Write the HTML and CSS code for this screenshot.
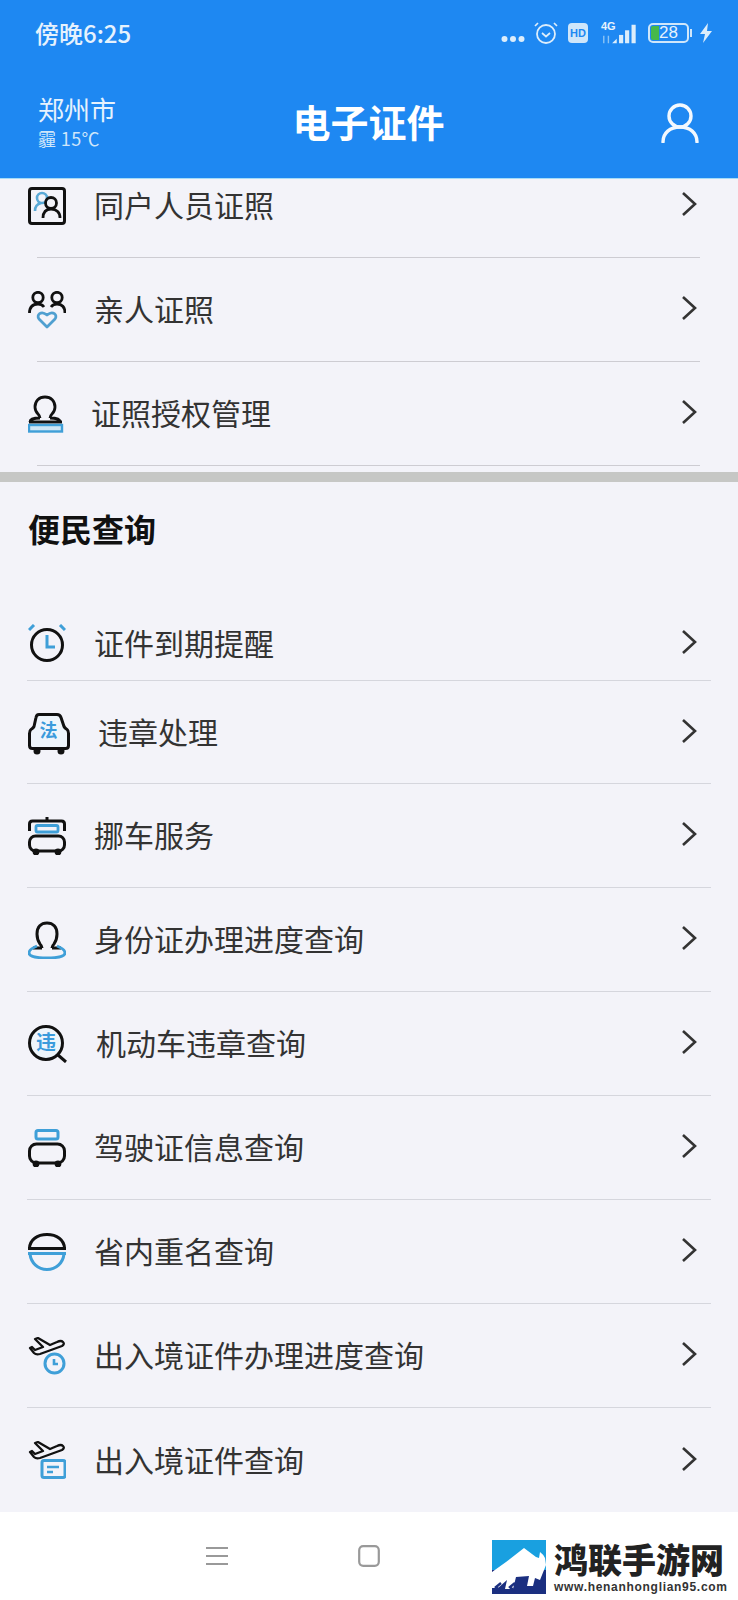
FILE: index.html
```html
<!DOCTYPE html>
<html lang="zh-CN">
<head>
<meta charset="utf-8">
<title>电子证件</title>
<link rel="stylesheet" href="styles.css">
</head>
<body>
<svg class="defs" width="0" height="0" aria-hidden="true">
  <symbol id="chev" viewBox="0 0 16 26"><path d="M2 2l12 11L2 24" fill="none" stroke="#333" stroke-width="2.600"/></symbol>
  <symbol id="plane" viewBox="0 0 38 20"><path d="M2 11l4 5q2 2 6 1l22-8q3-2 1-4t-6 0l-7 3L10 1 7 2l8 8-8 3-3-3z" fill="none" stroke="#111" stroke-width="2.300" stroke-linejoin="round"/></symbol>
</svg>
<div class="page">
  <header class="top">
    <div class="status">
      <span class="status__time">傍晚6:25</span>
      <div class="status__icons">
        <svg class="ic-dots" width="24" height="8" viewBox="0 0 24 8"><g fill="#dcedfb"><circle cx="3.500" cy="4" r="3"/><circle cx="12" cy="4" r="3"/><circle cx="20.500" cy="4" r="3"/></g></svg>
        <svg class="ic-alarm" width="24" height="24" viewBox="0 0 24 24"><g fill="none" stroke="#dcedfb"><circle cx="12" cy="13" r="9" stroke-width="1.800"/><path d="M8 12l4 3.500 4-3.500" stroke-width="1.700"/><path d="M1 5l3-3M23 5l-3-3" stroke-width="1.700"/></g></svg>
        <span class="ic-hd">HD</span>
        <span class="ic-signal">
          <span class="ic-signal__label">4G</span>
          <svg width="40" height="24" viewBox="0 0 40 24"><g fill="#dcedfb"><path d="M12 22l5-5v5z"/><rect x="19.500" y="13" width="4.500" height="9"/><rect x="26" y="8" width="4.500" height="14"/><rect x="33" y="2" width="4.500" height="20"/></g><path d="M3 14v8M8 14v8" stroke="#8cc4f5" stroke-width="1.500"/></svg>
        </span>
        <span class="ic-battery"><span class="ic-battery__level">28</span></span>
        <svg class="ic-bolt" width="14" height="20" viewBox="0 0 14 20"><path d="M9 0L1 11h5l-2 9 9-12H8z" fill="#dcedfb"/></svg>
      </div>
    </div>
    <div class="nav">
      <div class="nav__place">
        <div class="nav__city">郑州市</div>
        <div class="nav__weather">霾 15℃</div>
      </div>
      <h1 class="nav__title">电子证件</h1>
      <svg class="nav__user" width="38" height="40" viewBox="0 0 38 40"><g fill="none" stroke="#f2f8fe" stroke-width="3.400"><circle cx="19" cy="13" r="11"/><path d="M2 39c0-9 7-15 17-15s17 6 17 15" stroke-linecap="round"/></g></svg>
    </div>
  </header>

  <main class="content">
    <section class="list list--inset">
      <a class="row">
        <span class="row__icon"><svg width="38" height="38" viewBox="0 0 38 38"><rect x="1.500" y="1.500" width="35" height="35" rx="2.500" fill="none" stroke="#111" stroke-width="3"/><g fill="none" stroke="#5aa9d6" stroke-width="2.600"><circle cx="14" cy="11" r="5"/><path d="M7 24c0-4 2-7 6-8"/></g><g fill="none" stroke="#111" stroke-width="2.800"><circle cx="23" cy="16" r="5.500"/><path d="M15 31c0-6 3-9 8-9s9 3 9 9"/></g></svg></span>
        <span class="row__label">同户人员证照</span>
        <svg class="row__chev" width="16" height="26"><use href="#chev"/></svg>
      </a>
      <a class="row">
        <span class="row__icon"><svg width="38" height="38" viewBox="0 0 38 38"><g fill="none" stroke="#111" stroke-width="2.800"><circle cx="10" cy="6.500" r="5.200"/><path d="M1.500 22c0-6 3-9 8.500-9 2.500 0 4.500 1 6 3"/><circle cx="29" cy="6.500" r="5.200"/><path d="M37 22c0-6-3-9-8-9-2.500 0-4.500 1-6 3"/></g><path d="M19 36l-8-8c-3-4 2-9 8-4 6-5 11 0 8 4z" fill="none" stroke="#4f9fd0" stroke-width="2.800" stroke-linejoin="round"/></svg></span>
        <span class="row__label">亲人证照</span>
        <svg class="row__chev" width="16" height="26"><use href="#chev"/></svg>
      </a>
      <a class="row">
        <span class="row__icon"><svg width="38" height="38" viewBox="0 0 38 38"><path d="M12 23c0-2-1-3-2-4-2-2-3-4-3-7 0-6 4-10 10-10s10 4 10 10c0 3-1 5-3 7-1 1-2 2-2 4M2 27c0-3 3-4 10-4M32 27c0-3-3-4-10-4M1 27h33" fill="none" stroke="#111" stroke-width="2.800"/><rect x="1" y="30" width="33" height="6.500" fill="#cfe6f6" stroke="#3f9fd8" stroke-width="2.400"/></svg></span>
        <span class="row__label row__label--x92">证照授权管理</span>
        <svg class="row__chev" width="16" height="26"><use href="#chev"/></svg>
      </a>
    </section>
    <div class="band"></div>
    <h2 class="section-title">便民查询</h2>
    <section class="list list--wide">
      <a class="row row--lead">
        <span class="row__icon"><svg width="38" height="38" viewBox="0 0 38 38"><circle cx="19" cy="21" r="15.500" fill="none" stroke="#111" stroke-width="3"/><path d="M19 11v12h8" fill="none" stroke="#3f9fd8" stroke-width="3"/><path d="M1 6l5-5M37 6l-5-5" fill="none" stroke="#3f9fd8" stroke-width="3"/></svg></span>
        <span class="row__label">证件到期提醒</span>
        <svg class="row__chev" width="16" height="26"><use href="#chev"/></svg>
      </a>
      <a class="row row--tight">
        <span class="row__icon"><svg width="42" height="42" viewBox="0 0 42 42"><path d="M11 1.500h18q3 0 4 3l3 9q1 2 3 3 1.500 1 1.500 4v12q0 3-3 3H4.500q-3 0-3-3V20.500q0-3 1.500-4 2-1 3-3l2-9q.5-3 3-3z" fill="#eef5fb" stroke="#111" stroke-width="3" stroke-linejoin="round"/><circle cx="9" cy="38" r="3.500" fill="#111"/><circle cx="33" cy="38" r="3.500" fill="#111"/><text class="icon-glyph" x="20.500" y="24" font-size="18">法</text></svg></span>
        <span class="row__label row__label--x99">违章处理</span>
        <svg class="row__chev" width="16" height="26"><use href="#chev"/></svg>
      </a>
      <a class="row">
        <span class="row__icon"><svg width="38" height="38" viewBox="0 0 38 38"><path d="M1.500 14V7q0-3 3-3h29q3 0 3 3v7M19 0v4" fill="none" stroke="#111" stroke-width="3"/><rect x="8" y="8.500" width="22" height="6.500" rx="1.500" fill="none" stroke="#3f9fd8" stroke-width="2.800"/><rect x="1.500" y="19" width="35" height="15" rx="6" fill="none" stroke="#111" stroke-width="3"/><circle cx="8" cy="35" r="3.400" fill="#111"/><circle cx="30" cy="35" r="3.400" fill="#111"/></svg></span>
        <span class="row__label">挪车服务</span>
        <svg class="row__chev" width="16" height="26"><use href="#chev"/></svg>
      </a>
      <a class="row">
        <span class="row__icon"><svg width="38" height="38" viewBox="0 0 38 38"><path d="M14 27c0-2-1-3-2-4-2-3-3-6-3-10 0-7 4-11 10-11s10 4 10 11c0 4-1 7-3 10-1 1-2 2-2 4M5 27h9M24 27h9" fill="none" stroke="#111" stroke-width="3"/><path d="M9 25c-5 2-8 4-8 7s6 5 18 5 18-2 18-5-3-5-8-7" fill="none" stroke="#3f9fd8" stroke-width="2.800"/></svg></span>
        <span class="row__label">身份证办理进度查询</span>
        <svg class="row__chev" width="16" height="26"><use href="#chev"/></svg>
      </a>
      <a class="row">
        <span class="row__icon"><svg width="40" height="38" viewBox="0 0 40 38"><circle cx="18" cy="18" r="16.500" fill="#eef5fb" stroke="#111" stroke-width="3"/><path d="M30 30l8 7" stroke="#111" stroke-width="3"/><text class="icon-glyph" x="18" y="25" font-size="20">违</text></svg></span>
        <span class="row__label row__label--x97">机动车违章查询</span>
        <svg class="row__chev" width="16" height="26"><use href="#chev"/></svg>
      </a>
      <a class="row">
        <span class="row__icon"><svg width="38" height="38" viewBox="0 0 38 38"><rect x="8" y="1.500" width="22" height="8.500" rx="2" fill="none" stroke="#3f9fd8" stroke-width="3"/><rect x="1.500" y="15" width="35" height="19" rx="7" fill="none" stroke="#111" stroke-width="3"/><circle cx="8" cy="35" r="3.400" fill="#111"/><circle cx="30" cy="35" r="3.400" fill="#111"/></svg></span>
        <span class="row__label">驾驶证信息查询</span>
        <svg class="row__chev" width="16" height="26"><use href="#chev"/></svg>
      </a>
      <a class="row">
        <span class="row__icon"><svg width="38" height="38" viewBox="0 0 38 38"><path d="M1.500 15C2 7 9 1.500 19 1.500S36 7 36.500 15" fill="none" stroke="#111" stroke-width="3"/><path d="M0 15.500h38" stroke="#111" stroke-width="3"/><path d="M0 20.500h38" stroke="#3f9fd8" stroke-width="3"/><path d="M2 21c1 9 8 15.500 17 15.500S35 30 36 21" fill="none" stroke="#3f9fd8" stroke-width="3"/></svg></span>
        <span class="row__label">省内重名查询</span>
        <svg class="row__chev" width="16" height="26"><use href="#chev"/></svg>
      </a>
      <a class="row">
        <span class="row__icon"><svg width="38" height="38" viewBox="0 0 38 38"><use href="#plane" width="38" height="20"/><circle cx="26.500" cy="26.500" r="9.500" fill="none" stroke="#3f9fd8" stroke-width="3"/><path d="M26 22v5h4" fill="none" stroke="#3f9fd8" stroke-width="2.600"/></svg></span>
        <span class="row__label">出入境证件办理进度查询</span>
        <svg class="row__chev" width="16" height="26"><use href="#chev"/></svg>
      </a>
      <a class="row row--last">
        <span class="row__icon"><svg width="38" height="38" viewBox="0 0 38 38"><use href="#plane" width="38" height="20"/><rect x="14" y="19.500" width="23" height="17" rx="2" fill="none" stroke="#3f9fd8" stroke-width="3"/><path d="M19 26h12M19 31h6" fill="none" stroke="#3f9fd8" stroke-width="2.600"/></svg></span>
        <span class="row__label">出入境证件查询</span>
        <svg class="row__chev" width="16" height="26"><use href="#chev"/></svg>
      </a>
    </section>
  </main>

  <footer class="bar">
    <svg class="bar__menu" width="22" height="20" viewBox="0 0 22 20"><path d="M0 2h22M0 10h22M0 18h22" stroke="#999" stroke-width="2"/></svg>
    <svg class="bar__home" width="22" height="22" viewBox="0 0 22 22"><rect x="1.200" y="1.200" width="19.600" height="19.600" rx="4" fill="none" stroke="#999" stroke-width="2.200"/></svg>
    <div class="mark">
      <svg class="mark__logo" width="54" height="54" viewBox="0 0 54 54"><rect width="54" height="54" fill="#19a0e0"/><rect y="30" width="54" height="24" fill="#1b2f80"/><path d="M0 32l14-10L32 8l12 9 3 1 1-6q4 3 5 6l1 7-6 15-5-2-2 8h-6l2-10-13 1-3 12h-8l2-9-9 8H0z" fill="#fff"/><path d="M9 43l-5 4 5 5M23 43l-5 4 5 5" fill="none" stroke="#1b2f80" stroke-width="2.500"/></svg>
      <div class="mark__text">
        <div class="mark__name">鸿联手游网</div>
        <div class="mark__url">www.henanhonglian95.com</div>
      </div>
    </div>
  </footer>
</div>
</body>
</html>
```
FILE: styles.css
```css
* { box-sizing: border-box; }
html, body { margin: 0; padding: 0; }
body {
  width: 738px;
  height: 1600px;
  overflow: hidden;
  background: #fff;
  font-family: "Noto Sans CJK SC", "Noto Sans", sans-serif;
  color: #333;
}
.defs { display: block; height: 0; }
.page { display: flex; flex-direction: column; height: 1600px; }

.top {
  flex: none;
  height: 179px;
  background: #1e88f2;
  border-bottom: 1px solid #a5dcf8;
  color: #e6f2fd;
}
.status {
  height: 66px;
  display: flex;
  align-items: center;
  justify-content: space-between;
  padding: 0 25px 0 35px;
}
.status__time { font-size: 24px; font-weight: 500; line-height: 1; }
.status__icons { display: flex; align-items: center; }
.ic-dots { margin-top: 12px; margin-right: 9px; }
.ic-alarm { margin-right: 10px; }
.ic-hd {
  width: 20px;
  height: 20px;
  margin-right: 10px;
  border-radius: 4px;
  background: #cfe6fa;
  color: #1e88f2;
  font: 700 11px/20px "Liberation Sans", sans-serif;
  text-align: center;
}
.ic-signal { display: flex; width: 40px; margin-right: 10px; align-items: flex-end; }
.ic-signal__label {
  width: 0;
  margin-left: 3px;
  margin-bottom: 15px;
  font: 700 11px/10px "Liberation Sans", sans-serif;
  color: #e6f2fd;
}
.ic-battery {
  position: relative;
  width: 41px;
  height: 20px;
  margin-right: 10px;
  padding: 1px;
  border: 2px solid #cfe6fa;
  border-radius: 5px;
}
.ic-battery::after {
  content: "";
  position: absolute;
  right: -5px;
  top: 4px;
  width: 2px;
  height: 8px;
  background: #cfe6fa;
}
.ic-battery__level {
  display: block;
  height: 100%;
  border-radius: 2px;
  background: linear-gradient(90deg, #46b84a 0 8px, transparent 8px);
  color: #e6f2fd;
  font: 400 17px/14px "Liberation Sans", sans-serif;
  text-align: center;
}

.nav {
  height: 112px;
  padding: 0 39px 0 38px;
  display: grid;
  grid-template-columns: 1fr auto 1fr;
  align-items: center;
}
.nav__city { font-size: 26px; line-height: 32px; color: #e6f2fd; }
.nav__weather { font-size: 18px; line-height: 26px; letter-spacing: 0.4px; color: #cfe6fa; }
.nav__title {
  margin: -3px 0 0;
  font-size: 38px;
  line-height: 48px;
  font-weight: 700;
  color: #fff;
}
.nav__user { justify-self: end; margin-top: 2px; }

.content { flex: 1; min-height: 0; overflow: hidden; background: #f3f3f9; }
.list--inset { margin-top: -25px; }

.row {
  display: flex;
  align-items: center;
  height: 104px;
  border-bottom: 1px solid #cdccd2;
}
.list--inset .row { margin: 0 38px 0 37px; }
.list--wide .row { margin: 0 27px; border-bottom-color: #d5d6dd; }
.list--wide .row--lead { height: 75px; }
.list--wide .row--tight { height: 103px; }
.list--wide .row--last { border-bottom: 0; }

.row__icon { flex: none; width: 38px; height: 38px; display: flex; }
.row__icon svg { flex: none; display: block; }
.list--inset .row__icon { margin-left: -9px; }
.list--wide .row__icon { margin-left: 1px; }

.row__label {
  flex: 1;
  margin-left: 28px;
  margin-top: -3px;
  font-size: 30px;
  line-height: 40px;
  color: #333;
}
.row__label--x92 { margin-left: 25px; }
.row__label--x97 { margin-left: 30px; }
.row__label--x99 { margin-left: 32px; }

.row__chev { flex: none; display: block; margin-top: -3px; }
.list--inset .row__chev { margin-right: 3px; }
.list--wide .row__chev { margin-right: 14px; }

.icon-glyph {
  fill: #3a9bdc;
  font-family: "Noto Sans CJK SC", sans-serif;
  font-weight: 700;
  text-anchor: middle;
}

.band { height: 10px; margin-top: 6px; background: #c6c7c5; }
.section-title {
  margin: 0;
  height: 124px;
  padding: 24px 0 0 28px;
  font-size: 32px;
  line-height: 44px;
  font-weight: 700;
  color: #111;
}

.bar {
  flex: none;
  height: 88px;
  background: #fff;
  display: flex;
  align-items: flex-start;
  padding-left: 206px;
}
.bar svg { flex: none; }
.bar__menu { margin-top: 34px; }
.bar__home { margin-top: 33px; margin-left: 130px; }
.mark { flex: none; display: flex; margin-left: 112px; margin-top: 28px; }
.mark__logo { display: block; }
.mark__text { margin-left: 8px; }
.mark__name {
  font-size: 34px;
  line-height: 38px;
  font-weight: 900;
  color: #222;
  white-space: nowrap;
}
.mark__url {
  margin-top: 2px;
  font: 700 12px/15px "Liberation Sans", sans-serif;
  letter-spacing: 0.7px;
  color: #333;
  white-space: nowrap;
}
```
